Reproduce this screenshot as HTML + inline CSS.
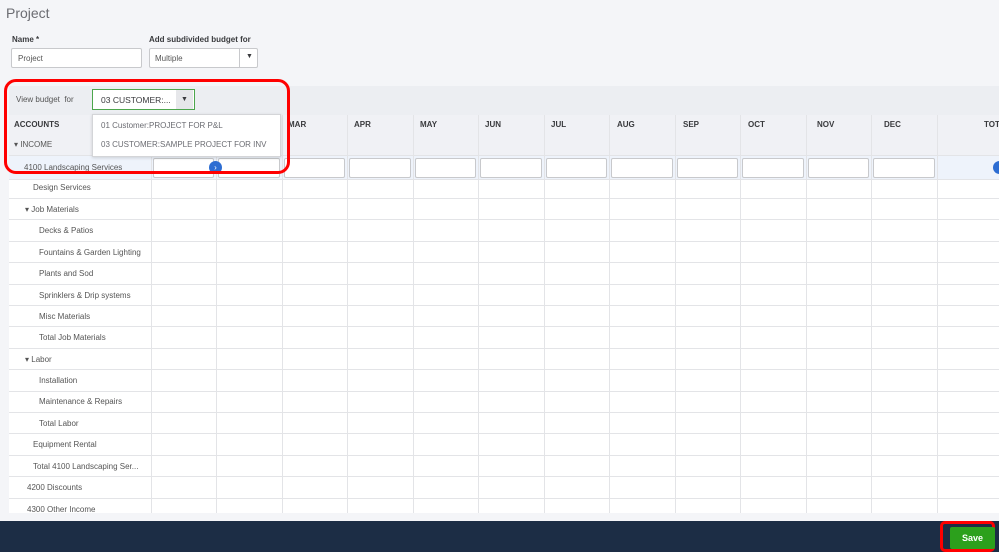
<!DOCTYPE html><html><head><style>
body{margin:0;width:999px;height:552px;overflow:hidden;background:#f4f5f8;font-family:"Liberation Sans",sans-serif;position:relative;color:#393a3d}
.a{position:absolute}
.t{font-size:8px;color:#555}
.inp{position:absolute;background:#fff;border:1px solid #c8c9cc;border-radius:2px}
.vl{position:absolute;width:1px;background:#e3e4e7}
.hl{position:absolute;left:9px;width:990px;height:1px;background:#e3e4e7}
.mh{position:absolute;top:120px;font-size:8px;font-weight:bold;color:#393a3d}
</style></head><body>
<div class="a" style="left:6px;top:5px;font-size:14px;color:#6b6c72">Project</div>
<div class="a" style="left:12px;top:35px;font-size:8px;font-weight:bold">Name *</div>
<div class="a" style="left:149px;top:35px;font-size:8px;font-weight:bold">Add subdivided budget for</div>
<div class="inp" style="left:11px;top:48px;width:129px;height:18px"><span class="t" style="position:absolute;left:6px;top:5px">Project</span></div>
<div class="inp" style="left:149px;top:48px;width:107px;height:18px"><span class="t" style="position:absolute;left:5px;top:5px">Multiple</span><div class="a" style="left:89px;top:0;width:1px;height:18px;background:#c8c9cc"></div><span class="a" style="left:96px;top:4px;font-size:7px">▼</span></div>
<!-- bar -->
<div class="a" style="left:9px;top:86px;width:990px;height:29px;background:#eceef2"></div>
<div class="a" style="left:16px;top:95px;font-size:8px;color:#555">View budget&nbsp; for</div>
<!-- table -->
<div class="a" style="left:9px;top:115px;width:990px;height:20px;background:#f0f1f5"></div>
<div class="a" style="left:9px;top:135px;width:990px;height:20px;background:#f0f1f5"></div>
<div class="a" style="left:9px;top:155px;width:990px;height:24px;background:#eef3fb"></div>
<div class="a" style="left:9px;top:179px;width:990px;height:334px;background:#fff"></div>
<div class="a" style="left:14px;top:120px;font-size:8px;font-weight:bold">ACCOUNTS</div>
<div class="mh" style="left:288px">MAR</div><div class="mh" style="left:354px">APR</div><div class="mh" style="left:420px">MAY</div><div class="mh" style="left:485px">JUN</div><div class="mh" style="left:551px">JUL</div><div class="mh" style="left:617px">AUG</div><div class="mh" style="left:683px">SEP</div><div class="mh" style="left:748px">OCT</div><div class="mh" style="left:817px">NOV</div><div class="mh" style="left:884px">DEC</div><div class="mh" style="left:984px">TOT</div>
<div class="a t" style="left:14px;top:140px">▾ INCOME</div>
<div class="a t" style="left:24px;top:163px">4100 Landscaping Services</div>
<div class="vl" style="left:151px;top:115px;height:398px"></div><div class="vl" style="left:216px;top:115px;height:398px"></div><div class="vl" style="left:282px;top:115px;height:398px"></div><div class="vl" style="left:347px;top:115px;height:398px"></div><div class="vl" style="left:413px;top:115px;height:398px"></div><div class="vl" style="left:478px;top:115px;height:398px"></div><div class="vl" style="left:544px;top:115px;height:398px"></div><div class="vl" style="left:609px;top:115px;height:398px"></div><div class="vl" style="left:675px;top:115px;height:398px"></div><div class="vl" style="left:740px;top:115px;height:398px"></div><div class="vl" style="left:806px;top:115px;height:398px"></div><div class="vl" style="left:871px;top:115px;height:398px"></div><div class="vl" style="left:937px;top:115px;height:398px"></div>
<div class="inp" style="left:153px;top:158px;width:59px;height:18px"></div><div class="inp" style="left:218px;top:158px;width:60px;height:18px"></div><div class="inp" style="left:284px;top:158px;width:59px;height:18px"></div><div class="inp" style="left:349px;top:158px;width:60px;height:18px"></div><div class="inp" style="left:415px;top:158px;width:59px;height:18px"></div><div class="inp" style="left:480px;top:158px;width:60px;height:18px"></div><div class="inp" style="left:546px;top:158px;width:59px;height:18px"></div><div class="inp" style="left:611px;top:158px;width:60px;height:18px"></div><div class="inp" style="left:677px;top:158px;width:59px;height:18px"></div><div class="inp" style="left:742px;top:158px;width:60px;height:18px"></div><div class="inp" style="left:808px;top:158px;width:59px;height:18px"></div><div class="inp" style="left:873px;top:158px;width:60px;height:18px"></div>
<div class="a" style="left:209px;top:161px;width:13px;height:13px;border-radius:50%;background:#2d6dd2;color:#fff;font-size:8px;text-align:center;line-height:13px">›</div>
<div class="a" style="left:993px;top:161px;width:13px;height:13px;border-radius:50%;background:#2d6dd2"></div>
<div class="hl" style="top:155px"></div><div class="hl" style="top:179px"></div>
<div class="hl" style="top:198px"></div><div class="hl" style="top:219px"></div><div class="hl" style="top:241px"></div><div class="hl" style="top:262px"></div><div class="hl" style="top:284px"></div><div class="hl" style="top:305px"></div><div class="hl" style="top:326px"></div><div class="hl" style="top:348px"></div><div class="hl" style="top:369px"></div><div class="hl" style="top:391px"></div><div class="hl" style="top:412px"></div><div class="hl" style="top:433px"></div><div class="hl" style="top:455px"></div><div class="hl" style="top:476px"></div><div class="hl" style="top:498px"></div>
<div class="a t" style="left:33px;top:183px">Design Services</div>
<div class="a t" style="left:25px;top:205px">▾ Job Materials</div>
<div class="a t" style="left:39px;top:226px">Decks &amp; Patios</div>
<div class="a t" style="left:39px;top:248px">Fountains &amp; Garden Lighting</div>
<div class="a t" style="left:39px;top:269px">Plants and Sod</div>
<div class="a t" style="left:39px;top:291px">Sprinklers &amp; Drip systems</div>
<div class="a t" style="left:39px;top:312px">Misc Materials</div>
<div class="a t" style="left:39px;top:333px">Total Job Materials</div>
<div class="a t" style="left:25px;top:355px">▾ Labor</div>
<div class="a t" style="left:39px;top:376px">Installation</div>
<div class="a t" style="left:39px;top:397px">Maintenance &amp; Repairs</div>
<div class="a t" style="left:39px;top:419px">Total Labor</div>
<div class="a t" style="left:33px;top:440px">Equipment Rental</div>
<div class="a t" style="left:33px;top:462px">Total 4100 Landscaping Ser...</div>
<div class="a t" style="left:27px;top:483px">4200 Discounts</div>
<div class="a t" style="left:27px;top:505px">4300 Other Income</div>
<!-- dropdown -->
<div class="a" style="left:92px;top:89px;width:101px;height:19px;background:#fff;border:1px solid #4ca64c"></div>
<div class="a" style="left:101px;top:95px;font-size:8.5px;color:#393a3d">03 CUSTOMER:...</div>
<div class="a" style="left:176px;top:90px;width:17px;height:19px;background:#e6e7ea;font-size:7px;text-align:center;line-height:19px">▼</div>
<div class="a" style="left:92px;top:114px;width:187px;height:41px;background:#fff;border:1px solid #d4d5d8;box-shadow:0 1px 3px rgba(0,0,0,.15)"></div>
<div class="a" style="left:101px;top:121px;font-size:8px;color:#6b6c72">01 Customer:PROJECT FOR P&amp;L</div>
<div class="a" style="left:101px;top:140px;font-size:8px;color:#6b6c72">03 CUSTOMER:SAMPLE PROJECT FOR INV</div>
<div class="a" style="left:4px;top:79px;width:280px;height:89px;border:3px solid #f00;border-radius:12px"></div>
<!-- footer -->
<div class="a" style="left:0;top:521px;width:999px;height:31px;background:#1c2d45"></div>
<div class="a" style="left:940px;top:521px;width:55px;height:31px;border:3px solid #f00;border-radius:5px;box-sizing:border-box"></div>
<div class="a" style="left:950px;top:527px;width:45px;height:22px;background:#2ca01c;color:#fff;font-size:9px;font-weight:bold;text-align:center;line-height:22px;border-radius:2px">Save</div>
</body></html>
